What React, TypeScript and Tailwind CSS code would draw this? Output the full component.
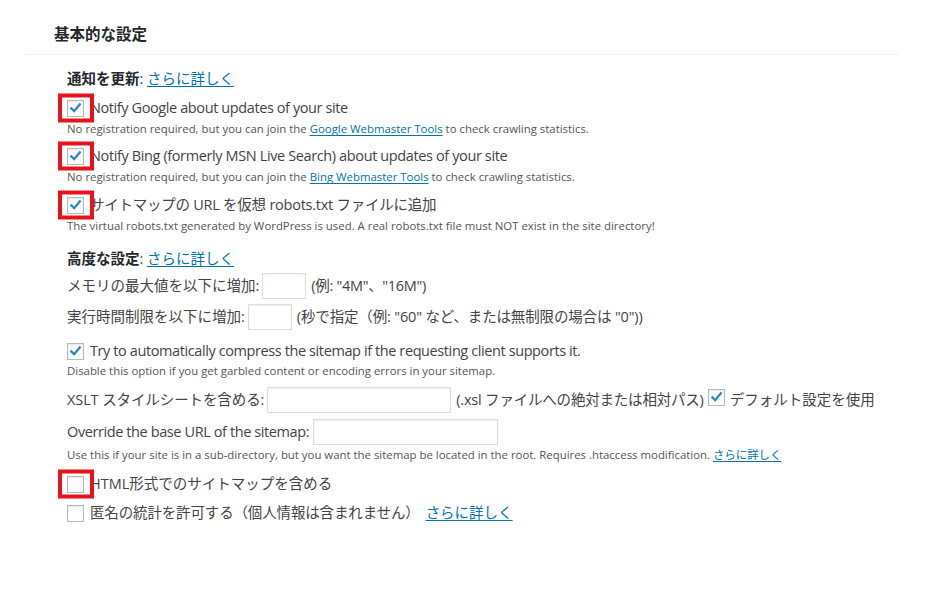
import React from "react";

function Check() {
  return (
    <svg viewBox="0 0 16 16" className="h-[16px] w-[16px]">
      <path d="M3.6 8.4 L6.6 11.4 L12.6 4.2" stroke="#1e8cbe" strokeWidth="2.4" fill="none" strokeLinecap="square" />
    </svg>
  );
}

function Cb({ checked, red }: { checked?: boolean; red?: boolean }) {
  return (
    <span className="relative inline-flex h-[17px] w-[17px] shrink-0 items-center justify-center border border-[#b4b9be] bg-white shadow-[inset_0_1px_2px_rgba(0,0,0,0.1)]">
      {checked && <Check />}
      {red && (
        <span className="absolute left-1/2 top-1/2 h-[29px] w-[36px] -translate-x-1/2 -translate-y-1/2 border-4 border-[#e8121d]" />
      )}
    </span>
  );
}

function Link({ children }: { children: React.ReactNode }) {
  return <a className="text-[#0073aa] underline underline-offset-2">{children}</a>;
}

function TextInput({ w }: { w: string }) {
  return (
    <input
      type="text"
      readOnly
      className={`block h-[26px] ${w} border border-[#ddd] bg-white shadow-[inset_0_1px_2px_rgba(0,0,0,0.07)] outline-none`}
    />
  );
}

const sub = "flex h-[14px] items-center text-[11.4px] text-[#555]";

export default function App() {
  return (
    <div className="h-[589px] w-[934px] bg-white font-['Open_Sans','Noto_Sans_CJK_JP',sans-serif] text-[#444]">
      <div className="pt-[22px]">
        <div className="flex h-[26px] items-center pl-[54px] text-[15.5px] font-bold text-[#23282d]">基本的な設定</div>
        <div className="ml-[25px] mt-[6px] h-px w-[873px] bg-[#eeeeee]" />
      </div>

      <div className="pl-[67px] text-[14.5px]">
        <div className="mt-[14px] flex h-[20px] items-center">
          <span className="font-bold text-[#23282d]">通知を更新</span>
          <span>:&nbsp;</span>
          <Link>さらに詳しく</Link>
        </div>

        <div className="mt-[5px] flex h-[28px] items-center">
          <Cb checked red />
          <span className="ml-[6px] tracking-[-0.4px]">Notify Google about updates of your site</span>
        </div>
        <div className={sub}>
          No registration required, but you can join the&nbsp;<Link>Google Webmaster Tools</Link>&nbsp;to check crawling statistics.
        </div>

        <div className="mt-[6px] flex h-[28px] items-center">
          <Cb checked red />
          <span className="ml-[6px] tracking-[-0.38px]">Notify Bing (formerly MSN Live Search) about updates of your site</span>
        </div>
        <div className={sub}>
          No registration required, but you can join the&nbsp;<Link>Bing Webmaster Tools</Link>&nbsp;to check crawling statistics.
        </div>

        <div className="mt-[7px] flex h-[28px] items-center">
          <Cb checked red />
          <span className="ml-[6px] tracking-[-0.25px]">サイトマップの URL を仮想 robots.txt ファイルに追加</span>
        </div>
        <div className={sub}>
          The virtual robots.txt generated by WordPress is used. A real robots.txt file must NOT exist in the site directory!
        </div>

        <div className="mt-[16px] flex h-[20px] items-center">
          <span className="font-bold text-[#23282d]">高度な設定</span>
          <span>:&nbsp;</span>
          <Link>さらに詳しく</Link>
        </div>

        <div className="mt-[4px] flex h-[26px] items-center">
          <span>メモリの最大値を以下に増加:</span>
          <span className="ml-[3px]"><TextInput w="w-[44px]" /></span>
          <span className="ml-[5px] tracking-[-0.3px]">(例: "4M"、"16M")</span>
        </div>

        <div className="mt-[5px] flex h-[26px] items-center">
          <span>実行時間制限を以下に増加:</span>
          <span className="ml-[3px]"><TextInput w="w-[44px]" /></span>
          <span className="ml-[5px] tracking-[-0.15px]">(秒で指定（例: "60" など、または無制限の場合は "0"))</span>
        </div>

        <div className="mt-[11px] flex h-[20px] items-center">
          <Cb checked />
          <span className="ml-[6px] tracking-[-0.4px]">Try to automatically compress the sitemap if the requesting client supports it.</span>
        </div>
        <div className={`mt-[3px] ${sub}`}>
          Disable this option if you get garbled content or encoding errors in your sitemap.
        </div>

        <div className="mt-[9px] flex h-[26px] items-center">
          <span className="tracking-[-0.1px]">XSLT スタイルシートを含める:</span>
          <span className="ml-[3px]"><TextInput w="w-[184px]" /></span>
          <span className="ml-[5px] tracking-[-0.2px]">(.xsl ファイルへの絶対または相対パス)</span>
          <span className="ml-[4px]"><Cb checked /></span>
          <span className="ml-[5px]">デフォルト設定を使用</span>
        </div>

        <div className="mt-[6px] flex h-[26px] items-center">
          <span className="tracking-[-0.4px]">Override the base URL of the sitemap:</span>
          <span className="ml-[4px]"><TextInput w="w-[185px]" /></span>
        </div>
        <div className={`mt-[3px] ${sub}`}>
          Use this if your site is in a sub-directory, but you want the sitemap be located in the root. Requires .htaccess modification.&nbsp;<Link>さらに詳しく</Link>
        </div>

        <div className="mt-[8px] flex h-[28px] items-center">
          <Cb red />
          <span className="ml-[6px]">HTML形式でのサイトマップを含める</span>
        </div>

        <div className="mt-[5px] flex h-[20px] items-center">
          <Cb />
          <span className="ml-[6px] tracking-[-0.15px]">匿名の統計を許可する（個人情報は含まれません）</span>
          <span className="ml-[6px]"><Link>さらに詳しく</Link></span>
        </div>
      </div>
    </div>
  );
}
